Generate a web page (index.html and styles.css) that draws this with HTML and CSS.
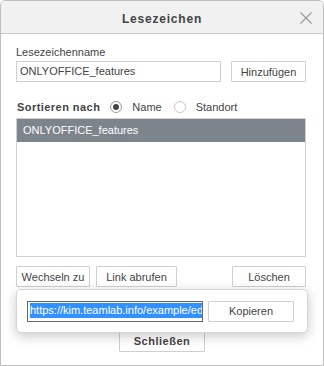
FILE: index.html
```html
<!DOCTYPE html>
<html>
<head>
<meta charset="utf-8">
<link rel="stylesheet" href="styles.css">
</head>
<body>
<div class="dialog">
  <div class="header">
    <span class="title">Lesezeichen</span>
    <svg class="close" width="14" height="14" viewBox="0 0 14 14"><path d="M1.5 1.5 L12.5 12.5 M12.5 1.5 L1.5 12.5" stroke="#9a9a9a" stroke-width="1.2" fill="none"/></svg>
  </div>
  <div class="content">
    <div class="label">Lesezeichenname</div>
    <div class="row name-row">
      <div class="input name-input">ONLYOFFICE_features</div>
      <div class="btn add-btn">Hinzufügen</div>
    </div>
    <div class="sort-row">
      <span class="sort-label">Sortieren nach</span>
      <span class="radio checked"></span><span class="radio-text">Name</span>
      <span class="radio"></span><span class="radio-text">Standort</span>
    </div>
    <div class="list">
      <div class="list-item selected">ONLYOFFICE_features</div>
    </div>
    <div class="row action-row">
      <div class="btn go-btn">Wechseln zu</div>
      <div class="btn link-btn">Link abrufen</div>
      <div class="spacer"></div>
      <div class="btn del-btn">Löschen</div>
    </div>
  </div>
  <div class="footer">
    <div class="btn close-btn">Schließen</div>
  </div>
  <div class="popup">
    <div class="input link-input"><span class="sel">https://kim.teamlab.info/example/ed</span></div>
    <div class="btn copy-btn">Kopieren</div>
  </div>
</div>
</body>
</html>
```
FILE: styles.css
```css
* { box-sizing: border-box; }
html, body { margin: 0; padding: 0; background: #fff; }
body {
  font-family: Arial, "Liberation Sans", Helvetica, sans-serif;
  font-size: 11px;
  color: #444;
}
.dialog {
  position: relative;
  width: 324px;
  height: 366px;
  border: 1px solid #bfbfbf;
  border-radius: 5px 5px 0 0;
  overflow: hidden;
  display: flex;
  flex-direction: column;
  background: #fff;
}
.header {
  height: 33px;
  flex: none;
  background: #f1f1f1;
  border-bottom: 1px solid #cbcbcb;
  display: flex;
  align-items: center;
  justify-content: center;
  position: relative;
}
.title {
  font-weight: bold;
  font-size: 12px;
  letter-spacing: 0.8px;
  color: #444;
  margin-top: 3px;
}
.close {
  position: absolute;
  right: 10px;
  top: 10px;
}
.content {
  padding: 11px 17px 0 15px;
  flex: 1;
}
.label {
  height: 14px;
  line-height: 14px;
  color: #444;
}
.row {
  display: flex;
  align-items: center;
}
.name-row {
  margin-top: 2px;
  justify-content: space-between;
}
.input {
  height: 21px;
  border: 1px solid #cfcfcf;
  padding: 0 3px;
  line-height: 19px;
  white-space: nowrap;
  overflow: hidden;
  color: #444;
}
.name-input { width: 205px; }
.btn {
  height: 21px;
  border: 1px solid #cfcfcf;
  border-radius: 1px;
  background: #fff;
  display: flex;
  align-items: center;
  justify-content: center;
  color: #444;
  white-space: nowrap;
}
.add-btn { width: 75px; }
.sort-row {
  margin-top: 17px;
  height: 16px;
  display: flex;
  align-items: center;
}
.sort-label {
  font-weight: bold;
  margin-left: 1px;
  margin-right: 10px;
  letter-spacing: 0.45px;
}
.radio {
  width: 12px;
  height: 12px;
  border-radius: 50%;
  border: 1px solid #c8c8c8;
  background: #fff;
  margin-right: 10px;
  position: relative;
}
.radio.checked { border-color: #9a9a9a; }
.radio.checked::after {
  content: "";
  position: absolute;
  left: 2px; top: 2px;
  width: 6px; height: 6px;
  border-radius: 50%;
  background: #444;
}
.radio-text { margin-right: 12px; }
.list {
  margin-top: 3px;
  height: 139px;
  border: 1px solid #cfcfcf;
}
.list-item {
  height: 23px;
  line-height: 23px;
  padding-left: 6px;
}
.list-item.selected {
  background: #7d858c;
  color: #fff;
}
.action-row {
  margin-top: 9px;
  gap: 6px;
}
.spacer { flex: 1; }
.go-btn { width: 74px; }
.link-btn { width: 81px; }
.del-btn { width: 74px; }
.footer {
  height: 35px;
  flex: none;
  display: flex;
  justify-content: center;
  align-items: flex-start;
}
.close-btn {
  width: 86px;
  height: 22px;
  font-weight: bold;
  letter-spacing: 0.5px;
}
.popup {
  position: absolute;
  left: 15px;
  top: 288px;
  width: 292px;
  height: 44px;
  background: #fff;
  border: 1px solid #d6d6d6;
  border-radius: 5px;
  box-shadow: 0 3px 12px rgba(0,0,0,0.22);
  display: flex;
  align-items: center;
  padding: 0 13px 0 10px;
  gap: 5px;
}
.link-input {
  width: 176px;
  border-color: #666;
  padding: 0 2px;
}
.sel {
  background: #3390ff;
  color: #fff;
  display: inline-block;
  line-height: 15px;
  vertical-align: middle;
  margin-top: -2px;
}
.copy-btn { width: 86px; }
```
